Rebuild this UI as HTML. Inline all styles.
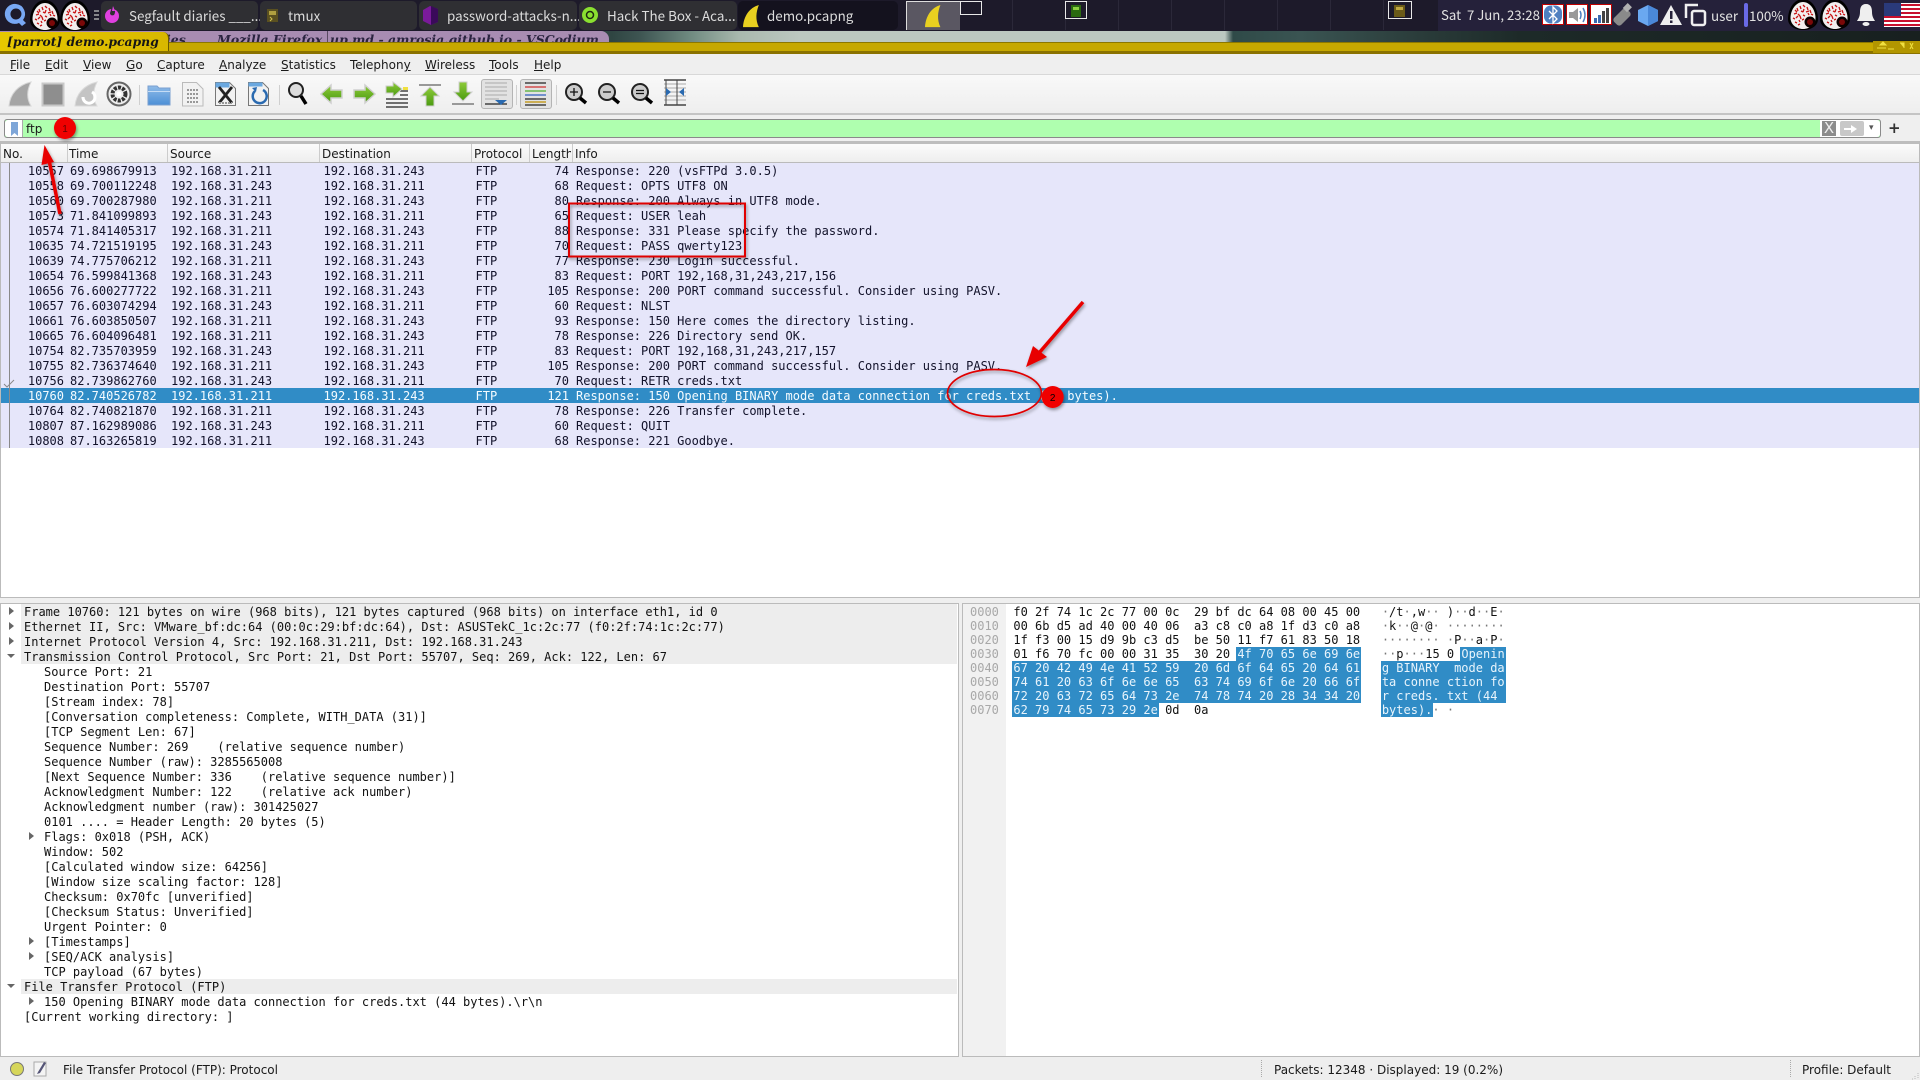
<!DOCTYPE html>
<html><head><meta charset="utf-8"><title>demo.pcapng</title>
<style>
*{box-sizing:border-box}
html,body{margin:0;padding:0;width:1920px;height:1080px;overflow:hidden;background:#efefef}
body{position:relative;font-family:"DejaVu Sans","Liberation Sans",sans-serif;font-size:12px;color:#1a1a1a}
.a{position:absolute;white-space:pre}
.tab{position:absolute;top:1px;height:29px;background:#2f2f33;border-radius:5px;color:#dcdcdc;font:13.4px/29px "Noto Sans CJK JP","Liberation Sans",sans-serif;white-space:pre}
.wt{position:absolute;top:31px;height:15px;font:italic bold 12.5px/18px "DejaVu Serif","Liberation Serif",serif;color:#2b2440;white-space:pre}
.m{position:absolute;top:58px;line-height:15px}
.h{position:absolute;top:147px;line-height:15px}
.s{position:absolute;top:144px;width:1px;height:18px;background:#ccc}
.mono{font-family:"DejaVu Sans Mono","Liberation Mono",monospace;font-size:12px}
.r{position:absolute;left:1px;width:1918px;height:15px;line-height:15px;background:#e6e6fa;color:#12122a;font-family:"DejaVu Sans Mono","Liberation Mono",monospace;font-size:12px;white-space:pre}
.r.sel{background:#308cc6;color:#f4fbff}
.r span{position:absolute;top:1px}
.n{right:1855px}.t{left:69px}.so{left:170px}.d{left:322.5px}.p{left:474.5px}.l{right:1350px}.i{left:575px}
.tr{position:absolute;height:15px;line-height:15px;margin-top:1px;font-family:"DejaVu Sans Mono","Liberation Mono",monospace;font-size:12px;white-space:pre;color:#111}
.g{position:absolute;left:21px;width:936px;height:15px;background:#ededed}
.hx{position:absolute;left:970px;height:14px;line-height:14px;font-family:"DejaVu Sans Mono","Liberation Mono",monospace;font-size:12px;white-space:pre;color:#111}
.hx b{font-weight:normal;color:#a8a8a8}
.hx i{font-style:normal;background:#308cc6;color:#e8f4fc;box-shadow:-1px 0 0 #308cc6,1px 0 0 #308cc6}
.hx em{font-style:normal;color:#777}
</style></head><body>

<!-- top panel -->
<div class="a" style="left:0;top:0;width:1920px;height:31px;background:#1d1a2a"></div>
<div class="a" style="left:1438px;top:0;width:482px;height:31px;background:#25213a"></div>
<div class="a" style="left:1012px;top:0;width:1px;height:30px;background:#2b2839"></div>
<div class="a" style="left:1065px;top:0;width:1px;height:30px;background:#2b2839"></div>
<div class="a" style="left:1118px;top:0;width:1px;height:30px;background:#2b2839"></div>
<div class="a" style="left:1171px;top:0;width:1px;height:30px;background:#2b2839"></div>
<div class="a" style="left:1224px;top:0;width:1px;height:30px;background:#2b2839"></div>
<div class="a" style="left:1277px;top:0;width:1px;height:30px;background:#2b2839"></div>
<div class="a" style="left:1330px;top:0;width:1px;height:30px;background:#2b2839"></div>
<div class="a" style="left:1383px;top:0;width:1px;height:30px;background:#2b2839"></div>
<div class="tab" style="left:101px;width:157px;padding-left:28px">Segfault diaries ___...</div>
<div class="tab" style="left:260px;width:157px;padding-left:28px">tmux</div>
<div class="tab" style="left:419px;width:158px;padding-left:28px">password-attacks-n...</div>
<div class="tab" style="left:579px;width:158px;padding-left:28px">Hack The Box - Aca...</div>
<div class="tab" style="left:738px;width:160px;padding-left:29px;background:#14121e">demo.pcapng</div>
<div class="a" style="left:906px;top:1px;width:54px;height:29px;background:#5a5762;border-left:1px solid #ddd;border-top:1px solid #ddd"></div>
<div class="a" style="left:960px;top:1px;width:22px;height:14px;border:1px solid #e8e8e8"></div>
<div class="a" style="left:1065px;top:1px;width:22px;height:18px;border:1px solid #e8e8e8"></div>
<div class="a" style="left:1388px;top:1px;width:24px;height:18px;border:1px solid #e8e8e8"></div>
<div class="a" style="left:1441px;top:5px;color:#e2e2e2;font:13.2px/20px 'Noto Sans CJK JP','Liberation Sans',sans-serif">Sat  7 Jun, 23:28</div>
<div class="a" style="left:1711px;top:5px;color:#e2e2e2;font:13.4px/20px 'Noto Sans CJK JP','Liberation Sans',sans-serif">user</div>
<div class="a" style="left:1749px;top:5px;color:#e2e2e2;font:13.4px/20px 'Noto Sans CJK JP','Liberation Sans',sans-serif">100%</div>
<div class="a" style="left:1744px;top:3px;width:4px;height:24px;background:#6a6ae6;border-radius:2px"></div>
<div class="a" style="left:1542px;top:4px;width:22px;height:21px;background:#fff;border:1.5px solid #c00000"></div>
<div class="a" style="left:1566px;top:4px;width:22px;height:21px;background:#fff;border:1.5px solid #c00000"></div>
<div class="a" style="left:1590px;top:4px;width:22px;height:21px;background:#fff;border:1.5px solid #c00000"></div>

<!-- window decoration strip -->
<div class="a" style="left:0;top:31px;width:1920px;height:12px;background:linear-gradient(90deg,#1f2a28 0,#2f4542 612px,#3e5552 640px,#6f8a80 690px,#a9b9ae 740px,#bcc8c0 800px,#bcc8c0 1225px,#2f4a48 1233px,#3a5452 1300px,#2a3c3a 1420px,#1d2a28 1520px,#18201f 1920px)"></div>
<div class="a" style="left:0;top:31px;width:609px;height:12px;background:#a88cb2;border-radius:0 8px 0 0"></div>
<div class="a" style="left:327px;top:31px;width:1px;height:12px;background:#5a4a62"></div>
<div style="position:absolute;left:0;top:31px;width:609px;height:12px;overflow:hidden">
<div class="wt" style="left:166px;top:0">ies</div>
<div class="wt" style="left:217px;top:0">Mozilla Firefox</div>
<div class="wt" style="left:330px;top:0">up.md - amrosia.github.io - VSCodium</div>
</div>
<div class="a" style="left:0;top:42px;width:1920px;height:9px;background:#c6a800;border-top:1px solid #8c7700"></div>
<div class="a" style="left:0;top:51px;width:1920px;height:3px;background:#8a7200"></div>
<div class="a" style="left:0;top:32px;width:169px;height:19px;background:linear-gradient(90deg,#e6c800,#d8b800);border-right:1px solid #6a5a00;border-radius:0 6px 0 0"></div>
<div class="a" style="left:7px;top:33px;font:italic bold 12.35px/18px 'DejaVu Serif','Liberation Serif',serif;color:#151515">[parrot] demo.pcapng</div>
<div class="a" style="left:1873px;top:41px;width:47px;height:12px;background:#b29600"></div>

<!-- menu -->
<div class="a" style="left:0;top:54px;width:1920px;height:20px;background:#efefef"></div>
<div class="a" style="left:0;top:74px;width:1920px;height:1px;background:#d8d8d8"></div>
<div class="m" style="left:10px"><u>F</u>ile</div>
<div class="m" style="left:45px"><u>E</u>dit</div>
<div class="m" style="left:83px"><u>V</u>iew</div>
<div class="m" style="left:126px"><u>G</u>o</div>
<div class="m" style="left:157px"><u>C</u>apture</div>
<div class="m" style="left:219px"><u>A</u>nalyze</div>
<div class="m" style="left:281px"><u>S</u>tatistics</div>
<div class="m" style="left:350px">Telephon<u>y</u></div>
<div class="m" style="left:425px"><u>W</u>ireless</div>
<div class="m" style="left:489px"><u>T</u>ools</div>
<div class="m" style="left:534px"><u>H</u>elp</div>

<!-- toolbar -->
<div class="a" style="left:0;top:75px;width:1920px;height:38px;background:linear-gradient(#f9f9f9,#eeeeee)"></div>
<div class="a" style="left:0;top:113px;width:1920px;height:2px;background:#c4c4c4"></div>
<div class="a" style="left:0;top:115px;width:1920px;height:23px;background:#efefef"></div>
<div class="a" style="left:481px;top:79px;width:32px;height:30px;background:#e2e2e2;border:1px solid #b4b4b4;border-radius:3px"></div>
<div class="a" style="left:520px;top:79px;width:32px;height:30px;background:#e2e2e2;border:1px solid #b4b4b4;border-radius:3px"></div>

<!-- filter -->
<div class="a" style="left:4px;top:119px;width:1877px;height:19px;background:#afffaf;border:1px solid #8a8a8a;border-radius:3px"></div>
<div class="a" style="left:5px;top:120px;width:18px;height:17px;background:#fff;border-right:1px solid #aaa;border-radius:3px 0 0 3px"></div>
<div class="a" style="left:1820px;top:120px;width:60px;height:17px;background:#fff;border-radius:0 3px 3px 0"></div>
<div class="a" style="left:26px;top:121px;line-height:16px">ftp</div>
<div class="a" style="left:1822px;top:121px;width:14px;height:15px;background:#8c8c8c;color:#eee;font-size:15px;line-height:15px;text-align:center">X</div>
<div class="a" style="left:1840px;top:121px;width:24px;height:15px;background:#c8c8c8;border-radius:2px"></div>
<div class="a" style="left:1869px;top:121px;font-size:9px;line-height:15px;color:#555">▾</div>
<div class="a" style="left:1888px;top:119px;font-size:15px;line-height:18px;font-weight:bold;color:#333">+</div>

<!-- packet list -->
<div class="a" style="left:0;top:141px;width:1920px;height:457px;background:#fff;border-top:3px solid #bdbdbd;border-left:1px solid #bbb;border-right:1px solid #bbb;border-bottom:1px solid #bbb"></div>
<div class="a" style="left:1px;top:144px;width:1918px;height:19px;background:linear-gradient(#fbfbfb,#eeeeee);border-bottom:1px solid #bbb"></div>
<div class="s" style="left:67px"></div><div class="s" style="left:167px"></div><div class="s" style="left:319px"></div><div class="s" style="left:471px"></div><div class="s" style="left:529px"></div><div class="s" style="left:572px"></div>
<div class="h" style="left:3px">No.</div><div class="h" style="left:69px">Time</div><div class="h" style="left:170px">Source</div><div class="h" style="left:322px">Destination</div><div class="h" style="left:474px">Protocol</div><div class="h" style="left:532px;width:39px;overflow:hidden">Length</div><div class="h" style="left:575px">Info</div>

<div class="r" style="top:163px"><span class="n">10557</span><span class="t">69.698679913</span><span class="so">192.168.31.211</span><span class="d">192.168.31.243</span><span class="p">FTP</span><span class="l">74</span><span class="i">Response: 220 (vsFTPd 3.0.5)</span></div>
<div class="r" style="top:178px"><span class="n">10558</span><span class="t">69.700112248</span><span class="so">192.168.31.243</span><span class="d">192.168.31.211</span><span class="p">FTP</span><span class="l">68</span><span class="i">Request: OPTS UTF8 ON</span></div>
<div class="r" style="top:193px"><span class="n">10560</span><span class="t">69.700287980</span><span class="so">192.168.31.211</span><span class="d">192.168.31.243</span><span class="p">FTP</span><span class="l">80</span><span class="i">Response: 200 Always in UTF8 mode.</span></div>
<div class="r" style="top:208px"><span class="n">10573</span><span class="t">71.841099893</span><span class="so">192.168.31.243</span><span class="d">192.168.31.211</span><span class="p">FTP</span><span class="l">65</span><span class="i">Request: USER leah</span></div>
<div class="r" style="top:223px"><span class="n">10574</span><span class="t">71.841405317</span><span class="so">192.168.31.211</span><span class="d">192.168.31.243</span><span class="p">FTP</span><span class="l">88</span><span class="i">Response: 331 Please specify the password.</span></div>
<div class="r" style="top:238px"><span class="n">10635</span><span class="t">74.721519195</span><span class="so">192.168.31.243</span><span class="d">192.168.31.211</span><span class="p">FTP</span><span class="l">70</span><span class="i">Request: PASS qwerty123</span></div>
<div class="r" style="top:253px"><span class="n">10639</span><span class="t">74.775706212</span><span class="so">192.168.31.211</span><span class="d">192.168.31.243</span><span class="p">FTP</span><span class="l">77</span><span class="i">Response: 230 Login successful.</span></div>
<div class="r" style="top:268px"><span class="n">10654</span><span class="t">76.599841368</span><span class="so">192.168.31.243</span><span class="d">192.168.31.211</span><span class="p">FTP</span><span class="l">83</span><span class="i">Request: PORT 192,168,31,243,217,156</span></div>
<div class="r" style="top:283px"><span class="n">10656</span><span class="t">76.600277722</span><span class="so">192.168.31.211</span><span class="d">192.168.31.243</span><span class="p">FTP</span><span class="l">105</span><span class="i">Response: 200 PORT command successful. Consider using PASV.</span></div>
<div class="r" style="top:298px"><span class="n">10657</span><span class="t">76.603074294</span><span class="so">192.168.31.243</span><span class="d">192.168.31.211</span><span class="p">FTP</span><span class="l">60</span><span class="i">Request: NLST</span></div>
<div class="r" style="top:313px"><span class="n">10661</span><span class="t">76.603850507</span><span class="so">192.168.31.211</span><span class="d">192.168.31.243</span><span class="p">FTP</span><span class="l">93</span><span class="i">Response: 150 Here comes the directory listing.</span></div>
<div class="r" style="top:328px"><span class="n">10665</span><span class="t">76.604096481</span><span class="so">192.168.31.211</span><span class="d">192.168.31.243</span><span class="p">FTP</span><span class="l">78</span><span class="i">Response: 226 Directory send OK.</span></div>
<div class="r" style="top:343px"><span class="n">10754</span><span class="t">82.735703959</span><span class="so">192.168.31.243</span><span class="d">192.168.31.211</span><span class="p">FTP</span><span class="l">83</span><span class="i">Request: PORT 192,168,31,243,217,157</span></div>
<div class="r" style="top:358px"><span class="n">10755</span><span class="t">82.736374640</span><span class="so">192.168.31.211</span><span class="d">192.168.31.243</span><span class="p">FTP</span><span class="l">105</span><span class="i">Response: 200 PORT command successful. Consider using PASV.</span></div>
<div class="r" style="top:373px"><span class="n">10756</span><span class="t">82.739862760</span><span class="so">192.168.31.243</span><span class="d">192.168.31.211</span><span class="p">FTP</span><span class="l">70</span><span class="i">Request: RETR creds.txt</span></div>
<div class="r sel" style="top:388px"><span class="n">10760</span><span class="t">82.740526782</span><span class="so">192.168.31.211</span><span class="d">192.168.31.243</span><span class="p">FTP</span><span class="l">121</span><span class="i">Response: 150 Opening BINARY mode data connection for creds.txt (44 bytes).</span></div>
<div class="r" style="top:403px"><span class="n">10764</span><span class="t">82.740821870</span><span class="so">192.168.31.211</span><span class="d">192.168.31.243</span><span class="p">FTP</span><span class="l">78</span><span class="i">Response: 226 Transfer complete.</span></div>
<div class="r" style="top:418px"><span class="n">10807</span><span class="t">87.162989086</span><span class="so">192.168.31.243</span><span class="d">192.168.31.211</span><span class="p">FTP</span><span class="l">60</span><span class="i">Request: QUIT</span></div>
<div class="r" style="top:433px"><span class="n">10808</span><span class="t">87.163265819</span><span class="so">192.168.31.211</span><span class="d">192.168.31.243</span><span class="p">FTP</span><span class="l">68</span><span class="i">Response: 221 Goodbye.</span></div>

<!-- tree panel -->
<div class="a" style="left:0;top:603px;width:959px;height:454px;background:#fff;border:1px solid #bbb"></div>
<div class="g" style="top:604px"></div><div class="g" style="top:619px"></div><div class="g" style="top:634px"></div><div class="g" style="top:649px"></div><div class="g" style="top:979px"></div>
<div class="tr" style="left:24px;top:604px">Frame 10760: 121 bytes on wire (968 bits), 121 bytes captured (968 bits) on interface eth1, id 0</div>
<div class="tr" style="left:24px;top:619px">Ethernet II, Src: VMware_bf:dc:64 (00:0c:29:bf:dc:64), Dst: ASUSTekC_1c:2c:77 (f0:2f:74:1c:2c:77)</div>
<div class="tr" style="left:24px;top:634px">Internet Protocol Version 4, Src: 192.168.31.211, Dst: 192.168.31.243</div>
<div class="tr" style="left:24px;top:649px">Transmission Control Protocol, Src Port: 21, Dst Port: 55707, Seq: 269, Ack: 122, Len: 67</div>
<div class="tr" style="left:44px;top:664px">Source Port: 21</div>
<div class="tr" style="left:44px;top:679px">Destination Port: 55707</div>
<div class="tr" style="left:44px;top:694px">[Stream index: 78]</div>
<div class="tr" style="left:44px;top:709px">[Conversation completeness: Complete, WITH_DATA (31)]</div>
<div class="tr" style="left:44px;top:724px">[TCP Segment Len: 67]</div>
<div class="tr" style="left:44px;top:739px">Sequence Number: 269    (relative sequence number)</div>
<div class="tr" style="left:44px;top:754px">Sequence Number (raw): 3285565008</div>
<div class="tr" style="left:44px;top:769px">[Next Sequence Number: 336    (relative sequence number)]</div>
<div class="tr" style="left:44px;top:784px">Acknowledgment Number: 122    (relative ack number)</div>
<div class="tr" style="left:44px;top:799px">Acknowledgment number (raw): 301425027</div>
<div class="tr" style="left:44px;top:814px">0101 .... = Header Length: 20 bytes (5)</div>
<div class="tr" style="left:44px;top:829px">Flags: 0x018 (PSH, ACK)</div>
<div class="tr" style="left:44px;top:844px">Window: 502</div>
<div class="tr" style="left:44px;top:859px">[Calculated window size: 64256]</div>
<div class="tr" style="left:44px;top:874px">[Window size scaling factor: 128]</div>
<div class="tr" style="left:44px;top:889px">Checksum: 0x70fc [unverified]</div>
<div class="tr" style="left:44px;top:904px">[Checksum Status: Unverified]</div>
<div class="tr" style="left:44px;top:919px">Urgent Pointer: 0</div>
<div class="tr" style="left:44px;top:934px">[Timestamps]</div>
<div class="tr" style="left:44px;top:949px">[SEQ/ACK analysis]</div>
<div class="tr" style="left:44px;top:964px">TCP payload (67 bytes)</div>
<div class="tr" style="left:24px;top:979px">File Transfer Protocol (FTP)</div>
<div class="tr" style="left:44px;top:994px">150 Opening BINARY mode data connection for creds.txt (44 bytes).\r\n</div>
<div class="tr" style="left:24px;top:1009px">[Current working directory: ]</div>

<!-- hex panel -->
<div class="a" style="left:962px;top:603px;width:958px;height:454px;background:#fff;border:1px solid #bbb"></div>
<div class="a" style="left:963px;top:604px;width:43px;height:452px;background:#f1f1f1"></div>
<div class="hx" style="top:604.7px"><b>0000</b>  f0 2f 74 1c 2c 77 00 0c  29 bf dc 64 08 00 45 00   <em>·</em>/t<em>·</em>,w<em>··</em> )<em>··</em>d<em>··</em>E<em>·</em></div>
<div class="hx" style="top:618.7px"><b>0010</b>  00 6b d5 ad 40 00 40 06  a3 c8 c0 a8 1f d3 c0 a8   <em>·</em>k<em>··</em>@<em>·</em>@<em>·</em> <em>········</em></div>
<div class="hx" style="top:632.7px"><b>0020</b>  1f f3 00 15 d9 9b c3 d5  be 50 11 f7 61 83 50 18   <em>········</em> <em>·</em>P<em>··</em>a<em>·</em>P<em>·</em></div>
<div class="hx" style="top:646.7px"><b>0030</b>  01 f6 70 fc 00 00 31 35  30 20 <i>4f 70 65 6e 69 6e</i>   <em>··</em>p<em>···</em>15 0 <i>Openin</i></div>
<div class="hx" style="top:660.7px"><b>0040</b>  <i>67 20 42 49 4e 41 52 59  20 6d 6f 64 65 20 64 61</i>   <i>g BINARY  mode da</i></div>
<div class="hx" style="top:674.7px"><b>0050</b>  <i>74 61 20 63 6f 6e 6e 65  63 74 69 6f 6e 20 66 6f</i>   <i>ta conne ction fo</i></div>
<div class="hx" style="top:688.7px"><b>0060</b>  <i>72 20 63 72 65 64 73 2e  74 78 74 20 28 34 34 20</i>   <i>r creds. txt (44 </i></div>
<div class="hx" style="top:702.7px"><b>0070</b>  <i>62 79 74 65 73 29 2e</i> 0d  0a                        <i>bytes).</i><em>· ·</em></div>

<!-- status -->
<div class="a" style="left:0;top:1057px;width:1920px;height:23px;background:#eeeeee"></div>
<div class="a" style="left:63px;top:1063px;line-height:15px">File Transfer Protocol (FTP): Protocol</div>
<div class="a" style="left:1274px;top:1063px;line-height:15px">Packets: 12348 · Displayed: 19 (0.2%)</div>
<div class="a" style="left:1802px;top:1063px;line-height:15px">Profile: Default</div>
<div class="a" style="left:1261px;top:1060px;width:0;height:17px;border-left:1px dotted #aaa"></div>
<div class="a" style="left:1790px;top:1060px;width:0;height:17px;border-left:1px dotted #aaa"></div>

<!-- graphics overlay -->
<svg style="position:absolute;left:0;top:0" width="1920" height="1080" viewBox="0 0 1920 1080">
<defs>
<g id="eye"><path d="M0 0C-9 0-15 10-15 20C-15 27-8 31 0 31C8 31 15 27 15 20C15 10 9 0 0 0Z" fill="#000"/><path d="M0 3C-7 3-12.500 11-12.500 19C-12.500 25-7 30 0 30C7 30 12.500 25 12.500 19C12.500 11 7 3 0 3Z" fill="#f2eeee"/>
<path d="M-8 11l2 2M-9 15l3-1M-6 9l1 3M-5 15l2 2M-3 7l1 3M-2 12l2 1M0 6l2 2M1 10l-1 3M4 8l1 3M3 13l3-1M7 11l1 3M8 15l2 1M-10 19l2 1M-7 19l2-2M-3 17l1 3M0 16l2 1M-8 23l2 1M-4 21l1 2M-1 21l2-1M-5 26l2-1M5 14l1 2" stroke="#c81414" stroke-width="1.300" fill="none"/>
<circle cx="7" cy="23" r="5.500" fill="#0c0000"/><circle cx="7" cy="23" r="3" fill="#7a0808"/></g>
<path id="fin" d="M0 24C1 12 9 3 22 0C18 8 17 16 22 24Z"/>
<linearGradient id="gr" x1="0" y1="0" x2="0" y2="1"><stop offset="0" stop-color="#8ecb3a"/><stop offset="1" stop-color="#4a9a10"/></linearGradient>
<linearGradient id="fo" x1="0" y1="0" x2="0" y2="1"><stop offset="0" stop-color="#8fbbe8"/><stop offset="1" stop-color="#4c8fd6"/></linearGradient>
<filter id="sh" x="-30%" y="-30%" width="170%" height="170%"><feDropShadow dx="1" dy="2" stdDeviation="1.5" flood-color="#000" flood-opacity=".4"/></filter>
</defs>

<!-- panel icons -->
<path d="M16 4a10 10 0 1 0 3 19l3 3 4-3-3-3a10 10 0 0 0-7-16zm0 4.500a5.500 5.500 0 1 1-.1 11 5.500 5.500 0 0 1 .1-11z" fill="#78a8f4"/>
<use href="#eye" x="45" y="0"/><use href="#eye" x="75" y="0"/>
<path d="M94 11h5M94 15h5M94 19h5" stroke="#aaa" stroke-width="1.500"/>
<circle cx="112" cy="16" r="7" fill="#e040e0"/><path d="M112 7c3 2 4 5 2 8c-2 1-4 0-4-2z" fill="#2f2f33"/><path d="M113 6l2 5-3 0z" fill="#e040e0"/>
<rect x="267" y="9" width="11" height="13" fill="#5a5020"/><rect x="269" y="11" width="7" height="4" fill="#b0a040"/><path d="M270 17l2 2-2 2" stroke="#d0c050" fill="none"/>
<path d="M423 10l7-4 8 3v13l-7 3-8-4z" fill="#7a1a9a"/><path d="M431 6l7 3v13l-7 3z" fill="#3a0a5a"/>
<circle cx="590" cy="15" r="8" fill="#8ae030"/><circle cx="590" cy="15" r="3.500" fill="none" stroke="#1d2a10" stroke-width="1.500"/>
<use href="#fin" transform="translate(743 5) scale(.72 .92)" fill="#e8d020"/>
<use href="#fin" transform="translate(925 5) scale(.7 .92)" fill="#e8d020"/>
<rect x="1071" y="5" width="10" height="12" fill="#2a6a10"/><rect x="1073" y="7" width="6" height="3" fill="#8ad040"/>
<rect x="1394" y="5" width="11" height="12" fill="#6a5a18"/><rect x="1396" y="7" width="7" height="3" fill="#c0a840"/>
<rect x="1544" y="5.500" width="18" height="18" rx="7" fill="#4f80c0"/><path d="M1549 11l8 8-4 4v-16l4 4-8 8" stroke="#fff" stroke-width="1.300" fill="none"/>
<path d="M1569 12h4l5-4v14l-5-4h-4z" fill="#999"/><path d="M1580 11q2 4 0 8M1583 8q4 7 0 14" stroke="#4f80c0" stroke-width="1.500" fill="none"/>
<rect x="1594" y="18" width="3" height="5" fill="#3a6ab0"/><rect x="1598" y="15" width="3" height="8" fill="#3a6ab0"/><rect x="1602" y="11" width="3" height="12" fill="#444"/><rect x="1606" y="8" width="3" height="15" fill="#444"/>
<rect x="1617" y="8" width="10" height="18" rx="3" transform="rotate(45 1622 17)" fill="#8a8a8a"/><rect x="1624" y="4" width="6" height="7" transform="rotate(45 1627 8)" fill="#b0b0b0"/>
<path d="M1648 5l10 5v11l-10 5-10-5V10z" fill="#6aa8f0"/><path d="M1648 5l10 5v11l-10 5z" fill="#4a88d8"/>
<path d="M1671 5l11 20h-22z" fill="#efefef"/><rect x="1670" y="11" width="2.500" height="8" fill="#25213a"/><rect x="1670" y="20.500" width="2.500" height="2.500" fill="#25213a"/>
<path d="M1698 5h-12v13" stroke="#efefef" stroke-width="2.500" fill="none"/><rect x="1692" y="11" width="13" height="14" rx="2" fill="#25213a" stroke="#efefef" stroke-width="2.500"/>
<use href="#eye" x="1803" y="-1"/><use href="#eye" x="1835" y="-1"/>
<path d="M1866 4c-5 0-6 4-6 8 0 5-2 7-3 9h18c-1-2-3-4-3-9 0-4-1-8-6-8z" fill="#efefef"/><ellipse cx="1866" cy="24" rx="3.500" ry="2" fill="#efefef"/>
<rect x="1884" y="3" width="36" height="24" fill="#fff"/><path d="M1884 5h36M1884 9h36M1884 13h36M1884 17h36M1884 21h36M1884 25h36" stroke="#c8102e" stroke-width="2"/><rect x="1884" y="3" width="17" height="13" fill="#2a3a7a"/>

<!-- window buttons -->
<path d="M1880 45l3-3 3 3zM1877 48h9M1888 49h6M1900 43h4v5M1910 43l3 6m0-6l-3 6" stroke="#f0e040" fill="#f0e040" stroke-width="1"/>

<!-- toolbar icons -->
<use href="#fin" transform="translate(9 82)" fill="#a5a5a5" stroke="#d5d5d5"/>
<rect x="42.500" y="83.500" width="21" height="22" fill="#8e8e8e" stroke="#c8c8c8" stroke-width="2"/>
<use href="#fin" transform="translate(75 82)" fill="#c4c4c4" stroke="#dadada"/>
<path d="M92 92a6 6 0 1 1-9 5" stroke="#fff" stroke-width="3" fill="none"/>
<circle cx="119" cy="94" r="11.500" fill="#eee" stroke="#666" stroke-width="2"/><circle cx="119" cy="94" r="6.500" fill="none" stroke="#333" stroke-width="4" stroke-dasharray="3 1.200"/><circle cx="119" cy="94" r="2.500" fill="#fff"/>
<path d="M139.500 85v20M279.500 85v20M516.500 85v20M556.500 85v20" stroke="#cfcfcf"/>
<path d="M148 86h9l2 2h11v17h-22z" fill="url(#fo)" stroke="#7aa0d0"/><rect x="148" y="91" width="22" height="1" fill="#c5dcf5"/>
<path d="M182.500 82.500h14l6.500 6.500v17h-20.500z" fill="#f2f2f2" stroke="#bbb"/><path d="M187 90h12M187 94h12M187 98h12M187 102h12" stroke="#999" stroke-width="2" stroke-dasharray="2 1"/>
<path d="M215.500 82.500h14l6 6v17h-20z" fill="#f2f2f2" stroke="#777"/><path d="M215.500 82.500h14v5h-14z" fill="#6aa8e0"/><path d="M219 87l13 16M232 87l-13 16" stroke="#222" stroke-width="2.800"/><path d="M219 103h13" stroke="#999" stroke-width="2" stroke-dasharray="2 1"/>
<path d="M248.500 82.500h14l6 6v17h-20z" fill="#f2f2f2" stroke="#777"/><path d="M248.500 82.500h14v4h-14z" fill="#6aa8e0"/><path d="M263 90a7 7 0 1 1-8 1" stroke="#2a6ab0" stroke-width="2.500" fill="none"/><path d="M252 88l5-1-1 5z" fill="#2a6ab0"/>
<circle cx="296" cy="90" r="7" fill="#ddd" stroke="#222" stroke-width="2"/><path d="M301 96l5 8" stroke="#000" stroke-width="3.500"/>
<path d="M321 94l10-9v5h11v8h-11v5z" fill="url(#gr)" stroke="#d0d0d0" stroke-width="1.500"/>
<path d="M375 94l-10-9v5h-11v8h11v5z" fill="url(#gr)" stroke="#d0d0d0" stroke-width="1.500"/>
<path d="M386 99h22M386 103h22M386 107h22M400 91h8M400 95h8" stroke="#222" stroke-width="1.300"/><path d="M402 89l-9-7v4h-7v7h7v4z" fill="url(#gr)" stroke="#cfcfcf"/><rect x="403" y="87" width="5" height="3" fill="#f0e040"/>
<path d="M419 85h22" stroke="#999" stroke-width="2"/><path d="M430 87l9 9h-5v10h-8V96h-5z" fill="url(#gr)" stroke="#cfcfcf"/>
<path d="M452 104h22" stroke="#999" stroke-width="2"/><path d="M463 101l9-9h-5V82h-8v10h-5z" fill="url(#gr)" stroke="#cfcfcf"/>
<path d="M485 83h22M485 87h22M485 91h22M485 95h22M485 99h14" stroke="#aaa"/><path d="M485 104h22" stroke="#222" stroke-width="1.300"/><path d="M495 100h12l-6 5z" fill="#2a6ab0"/>
<path d="M525 83h21" stroke="#222" stroke-width="1.300"/><path d="M525 87h21" stroke="#d03030" stroke-width="1.300"/><path d="M525 91h21" stroke="#50b030" stroke-width="1.300"/><path d="M525 95h21" stroke="#3060c0" stroke-width="1.300"/><path d="M525 99h21" stroke="#222" stroke-width="1.300"/><path d="M525 102h21" stroke="#c09000" stroke-width="1.300"/><path d="M525 105h21" stroke="#222" stroke-width="1.300"/>
<g fill="#ccc" stroke="#222" stroke-width="2"><circle cx="574" cy="92" r="8"/><circle cx="607" cy="92" r="8"/><circle cx="640" cy="92" r="8"/></g>
<path d="M580 98l6 5M613 98l6 5M646 98l6 5" stroke="#000" stroke-width="3.500"/>
<path d="M570 92h8M574 88v8M603 92h8M636 90.500h8M636 93.500h8" stroke="#111" stroke-width="1.300"/>
<path d="M664 84h22M664 88h22M664 92h22M664 96h22M664 100h22" stroke="#aaa"/><path d="M664 105h22M664 80h22" stroke="#222" stroke-width="1.200"/><path d="M666 80v25M677 80v25" stroke="#444"/><path d="M666 88v8l5-4zM684 88v8l-5-4z" fill="#2a6ab0"/>

<!-- filter icons -->
<path d="M11 122h7v14l-3.500-3-3.500 3z" fill="#7ea6d8"/>
<path d="M1844 128h7v-3l6 4-6 4v-3h-7z" fill="#fff"/>

<!-- packet gutter -->
<path d="M9.500 163v285" stroke="#8a8a8a"/><path d="M4 384l3 3 7-7" stroke="#888" fill="none"/>

<!-- tree arrows -->
<g fill="#666">
<path d="M9 607l5 4-5 4zM9 622l5 4-5 4zM9 637l5 4-5 4zM29 832l5 4-5 4zM29 937l5 4-5 4zM29 952l5 4-5 4zM29 997l5 4-5 4z"/>
<path d="M7 654l8 0-4 4zM7 984l8 0-4 4z"/>
</g>

<!-- status icons -->
<circle cx="17" cy="1069" r="6.500" fill="#d6d65a" stroke="#777"/>
<path d="M34 1062h12v14h-12z" fill="#f4f4f4" stroke="#aaa"/><path d="M44 1062l-6 10 -1 2 3-1 6-10z" fill="#557"/>
<path d="M1912 1079h2M1915 1076v3M1918 1073v6" stroke="#bbb" stroke-dasharray="1 1"/>

<!-- annotations -->
<g filter="url(#sh)">
<circle cx="65" cy="128" r="11" fill="#f00000"/>
<path d="M60 214L49 160" stroke="#e80000" stroke-width="3.500" fill="none"/><path d="M44.500 145l9.500 17-12.500 3z" fill="#e80000"/>
<rect x="569" y="203.500" width="176" height="53" fill="none" stroke="#e00000" stroke-width="2"/>
<path d="M1083 302L1039 353" stroke="#e80000" stroke-width="3.500" fill="none"/><path d="M1026 367l7-21 14 11z" fill="#e80000"/>
<ellipse cx="994.500" cy="393" rx="47" ry="23.500" fill="none" stroke="#e00000" stroke-width="1.700"/>
<circle cx="1052.700" cy="397" r="11" fill="#f00000"/>
</g>
<text x="65" y="132" font-size="10" text-anchor="middle" font-family="Liberation Sans,sans-serif" fill="#600">1</text>
<text x="1052.700" y="401" font-size="10" text-anchor="middle" font-family="Liberation Sans,sans-serif" fill="#000">2</text>
</svg>
</body></html>
